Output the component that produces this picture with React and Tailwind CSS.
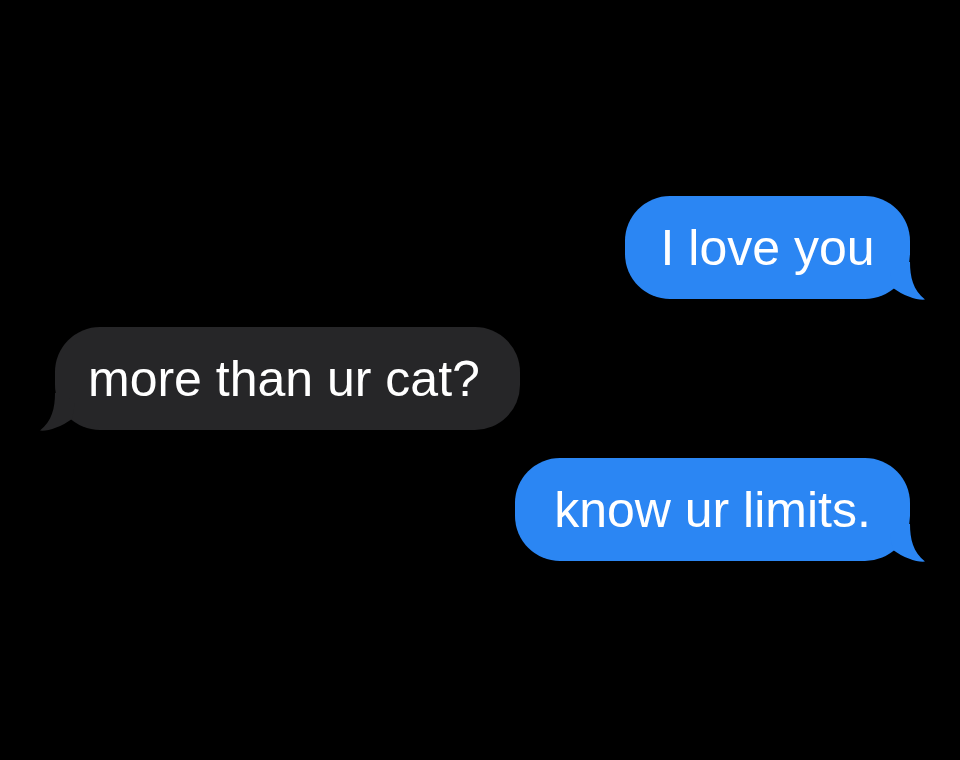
import React from "react";

const messages = [
  { text: "I love you", side: "right", width: "w-[285px]" },
  { text: "more than ur cat?", side: "left", width: "w-[465px]" },
  { text: "know ur limits.", side: "right", width: "w-[395px]" },
];

// Bubble tail, drawn for a right-side bubble (body edge at x=20, body bottom at y=36);
// mirrored for the left side.
function Tail({ color, side }) {
  const pos =
    side === "right"
      ? "absolute bottom-[-1px] right-[-16px]"
      : "absolute bottom-[-1px] left-[-16px] -scale-x-100";
  return (
    <svg
      className={pos}
      width="36"
      height="38"
      viewBox="0 0 36 38"
      aria-hidden="true"
    >
      <path
        d="M12 0 H20 C20 15 23 28 35 37.6 C27 38.4 14 34 3 26 L 0 10 Z"
        fill={color}
      />
    </svg>
  );
}

function Bubble({ text, side, width }) {
  const isRight = side === "right";
  const color = isRight ? "#2b86f3" : "#262628";
  return (
    <div
      className={`relative flex h-[103px] items-center rounded-[45px] pt-[2px] text-[50px] text-white ${width} ${
        isRight ? "justify-center bg-[#2b86f3]" : "bg-[#262628] pl-[33px]"
      }`}
    >
      <Tail color={color} side={side} />
      <span className="relative whitespace-nowrap">{text}</span>
    </div>
  );
}

export default function App() {
  return (
    <div
      className="flex h-[760px] w-[960px] flex-col gap-[28px] bg-black pl-[55px] pr-[50px] pt-[196px]"
      style={{ fontFamily: '"Liberation Sans", Arial, sans-serif' }}
    >
      {messages.map((m) => (
        <div
          key={m.text}
          className={`flex ${m.side === "right" ? "justify-end" : "justify-start"}`}
        >
          <Bubble {...m} />
        </div>
      ))}
    </div>
  );
}
